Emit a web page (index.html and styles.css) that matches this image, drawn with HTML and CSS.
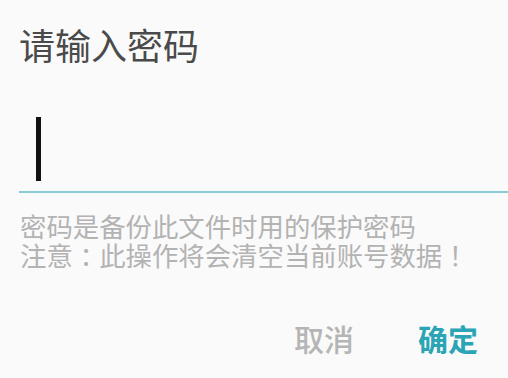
FILE: index.html
```html
<!DOCTYPE html>
<html lang="zh-CN">
<head>
    <meta charset="UTF-8">
    <meta name="viewport" content="width=device-width, initial-scale=1.0">
    <title>请输入密码</title>
    <link rel="stylesheet" href="styles.css">
</head>
<body>
    <div class="dialog">
        <h2 class="dialog-title">请输入密码</h2>
        <div class="password-field">
            <span class="caret"></span>
        </div>
        <p class="hint">密码是备份此文件时用的保护密码<br>注意<span class="punct">：</span>此操作将会清空当前账号数据<span class="punct">！</span></p>
        <div class="actions">
            <button class="btn btn-cancel">取消</button>
            <button class="btn btn-ok">确定</button>
        </div>
    </div>
</body>
</html>
```

FILE: styles.css
```css
body {
    margin: 0;
    background-color: #fafafa;
    font-family: "Noto Sans CJK SC", "Noto Sans", sans-serif;
}

.dialog {
    width: 508px;
    height: 378px;
    overflow: hidden;
}

.dialog-title {
    margin: 26px 0 0 19px;
    font-size: 36px;
    line-height: 36px;
    font-weight: 400;
    color: #4a4a4a;
}

.password-field {
    margin-left: 19px;
    padding: 55px 0 10px 17px;
    border-bottom: 2px solid #8ccbd3;
}

.caret {
    display: block;
    width: 5px;
    height: 64px;
    background-color: #111;
}

.hint {
    margin: 18px 0 0 20px;
    font-size: 26.4px;
    line-height: 29px;
    color: #b3b3b3;
    white-space: nowrap;
}

/* full-width punctuation sits in the middle of its cell on the device */
.punct {
    display: inline-block;
    width: 1em;
    text-align: center;
    font-feature-settings: "halt";
}

.actions {
    display: flex;
    justify-content: flex-end;
    gap: 64px;
    margin-top: 54px;
    padding-right: 30px;
}

.btn {
    background: none;
    border: 0;
    padding: 0;
    font-family: inherit;
    font-size: 30px;
    line-height: 30px;
    cursor: pointer;
}

.btn-cancel {
    color: #b5b5b5;
    font-weight: 500;
}

.btn-ok {
    color: #2ba5b6;
    font-weight: 700;
}
```
